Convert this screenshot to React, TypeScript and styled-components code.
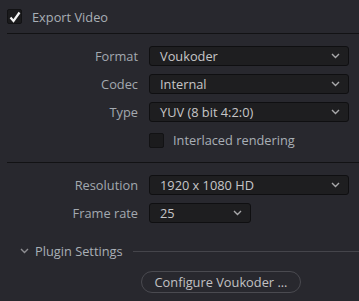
import React from "react";
import styled, { createGlobalStyle } from "styled-components";

const Global = createGlobalStyle`
  html, body { margin: 0; padding: 0; background: #28282e; }
  body { font-family: "Open Sans", "Noto Sans", sans-serif; font-size: 12.8px; }
`;

const Panel = styled.div`
  width: 359px;
  height: 301px;
  background: #28282e;
  display: flex;
  flex-direction: column;
  overflow: hidden;
`;

const Header = styled.label`
  display: flex;
  align-items: center;
  gap: 10px;
  height: 33px;
  padding-left: 7px;
  color: #a9afb6;
`;

const Box = styled.span`
  box-sizing: border-box;
  width: 15px;
  height: 15px;
  border: 1px solid #121214;
  border-radius: 2px;
  background: #1b1b1d;
  display: flex;
  align-items: center;
  justify-content: center;
`;

const Divider = styled.div`
  height: 1px;
  margin-left: 7px;
  background: #121214;
`;

const Form = styled.div<{ $pt: number; $pb: number }>`
  display: grid;
  grid-template-columns: 138px auto;
  column-gap: 11px;
  row-gap: 8px;
  padding-top: ${(p) => p.$pt}px;
  padding-bottom: ${(p) => p.$pb}px;
  align-items: center;
`;

const Label = styled.div`
  text-align: right;
  color: #a3a9b0;
  line-height: 20px;
`;

const Select = styled.div<{ $w: number }>`
  box-sizing: border-box;
  width: ${(p) => p.$w}px;
  height: 20px;
  border: 1px solid #0f0f11;
  border-radius: 3px;
  background: #1e1e20;
  color: #c6c6c8;
  display: flex;
  align-items: center;
  justify-content: space-between;
  padding: 0 8px 0 10px;
  line-height: 18px;
`;

const CheckRow = styled.label`
  grid-column: 2;
  display: flex;
  align-items: center;
  gap: 9px;
  height: 20px;
  color: #a9afb6;
`;

const SectionHead = styled.div`
  display: flex;
  align-items: center;
  gap: 6px;
  padding-left: 20px;
  height: 18px;
  margin-top: 19px;
  color: #a9afb6;
`;

const SectionLine = styled.div`
  flex: 1;
  height: 1px;
  background: #45454b;
  margin-left: 4px;
`;

const ButtonRow = styled.div`
  display: flex;
  padding-left: 141px;
  margin-top: 11px;
`;

const Button = styled.button`
  box-sizing: border-box;
  width: 160px;
  height: 22px;
  border: 1px solid #4a4a50;
  border-radius: 11px;
  background: #28282e;
  color: #c2c2c4;
  font-family: inherit;
  font-size: 12.8px;
  padding: 0;
  display: flex;
  align-items: center;
  justify-content: center;
`;

const Chevron = ({ color = "#a8a8aa" }: { color?: string }) => (
  <svg width="9" height="6" viewBox="0 0 9 6">
    <path d="M1 1 L4.5 4.5 L8 1" fill="none" stroke={color} strokeWidth="1.4" />
  </svg>
);

const Tick = () => (
  <svg width="12" height="12" viewBox="0 0 12 12">
    <path d="M1.5 6.5 L4.5 10 L10.5 1.5" fill="none" stroke="#f4f4f4" strokeWidth="2.2" />
  </svg>
);

const Dropdown = ({ value, w }: { value: string; w: number }) => (
  <Select $w={w}>
    <span>{value}</span>
    <Chevron />
  </Select>
);

export default function App() {
  return (
    <Panel>
      <Global />
      <Header>
        <Box>
          <Tick />
        </Box>
        Export Video
      </Header>
      <Divider />
      <Form $pt={12} $pb={12}>
        <Label>Format</Label>
        <Dropdown value="Voukoder" w={200} />
        <Label>Codec</Label>
        <Dropdown value="Internal" w={200} />
        <Label>Type</Label>
        <Dropdown value="YUV (8 bit 4:2:0)" w={200} />
        <CheckRow>
          <Box />
          Interlaced rendering
        </CheckRow>
      </Form>
      <Divider />
      <Form $pt={12} $pb={0}>
        <Label>Resolution</Label>
        <Dropdown value="1920 x 1080 HD" w={200} />
        <Label>Frame rate</Label>
        <Dropdown value="25" w={102} />
      </Form>
      <SectionHead>
        <Chevron color="#8e8e92" />
        <span>Plugin Settings</span>
        <SectionLine />
      </SectionHead>
      <ButtonRow>
        <Button>Configure Voukoder ...</Button>
      </ButtonRow>
    </Panel>
  );
}
